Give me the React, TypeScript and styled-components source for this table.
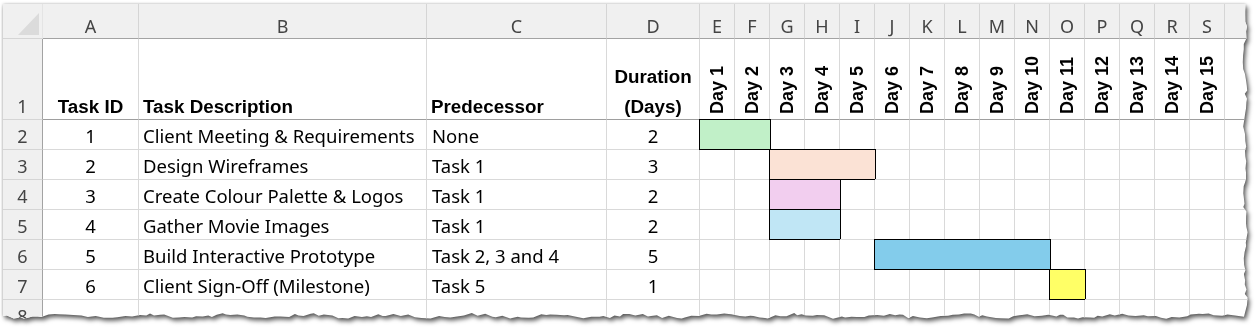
import React from 'react';
import styled, { createGlobalStyle } from 'styled-components';

const COLUMN_LETTERS = 'ABCDEFGHIJKLMNOPQRST'.split('');
const DAY_COUNT = 15;
const GANTT_COLS = DAY_COUNT + 1;

const tasks = [
  { id: 1, desc: 'Client Meeting & Requirements', pred: 'None', dur: 2, start: 1, color: '#c1f0c8' },
  { id: 2, desc: 'Design Wireframes', pred: 'Task 1', dur: 3, start: 3, color: '#fbe2d5' },
  { id: 3, desc: 'Create Colour Palette & Logos', pred: 'Task 1', dur: 2, start: 3, color: '#f2ceef' },
  { id: 4, desc: 'Gather Movie Images', pred: 'Task 1', dur: 2, start: 3, color: '#c0e6f5' },
  { id: 5, desc: 'Build Interactive Prototype', pred: 'Task 2, 3 and 4', dur: 5, start: 6, color: '#83cceb' },
  { id: 6, desc: 'Client Sign-Off (Milestone)', pred: 'Task 5', dur: 1, start: 11, color: '#ffff66' },
];

// jagged right and bottom edge, like a torn-off screenshot
const makeTear = (w: number, h: number) => {
  let seed = 11;
  const rnd = () => {
    seed = (seed * 9301 + 49297) % 233280;
    return seed / 233280;
  };
  const pts: string[] = ['0px 0px'];
  const rx = w - 5;
  for (let y = 0; y < h - 6; y += 3 + rnd() * 5) {
    const x = rx + Math.sin(y / 11) * 1.2 + (rnd() - 0.5) * 3;
    pts.push(`${x.toFixed(1)}px ${y.toFixed(1)}px`);
  }
  const by = h - 5;
  for (let x = w - 6; x > 0; x -= 3 + rnd() * 6) {
    const y = by + Math.sin(x / 13) * 1.5 + (rnd() - 0.5) * 3;
    pts.push(`${x.toFixed(1)}px ${y.toFixed(1)}px`);
  }
  pts.push(`0px ${by}px`);
  return `polygon(${pts.join(', ')})`;
};

const SHEET_W = 1247;
const SHEET_H = 317;
const tear = makeTear(SHEET_W, SHEET_H);

const blanks = (n: number, prefix: string) =>
  Array.from({ length: Math.max(n, 0) }, (_, c) => <Cell key={`${prefix}${c}`} />);

const App: React.FC = () => {
  const days = Array.from({ length: DAY_COUNT }, (_, i) => i + 1);

  return (
    <Page>
      <GlobalStyle />
      <Shadow>
        <Sheet $clip={tear}>
          <Grid>
            <Corner>
              <Triangle />
            </Corner>
            {COLUMN_LETTERS.map((l) => (
              <ColHead key={l}>{l}</ColHead>
            ))}

            <RowHead>1</RowHead>
            <HeadCell $center>Task ID</HeadCell>
            <HeadCell>Task Description</HeadCell>
            <HeadCell>Predecessor</HeadCell>
            <HeadCell $center>
              <span>Duration</span>
              <span>(Days)</span>
            </HeadCell>
            {days.map((d) => (
              <DayHead key={d}>
                <DayLabel>Day {d}</DayLabel>
              </DayHead>
            ))}
            <HeadCell />

            {tasks.map((t, i) => (
              <React.Fragment key={t.id}>
                <RowHead>{i + 2}</RowHead>
                <Cell $center>{t.id}</Cell>
                <Cell>{t.desc}</Cell>
                <Cell $pad={5}>{t.pred}</Cell>
                <Cell $center>{t.dur}</Cell>
                {blanks(t.start - 1, 'a')}
                <Bar $span={t.dur} $color={t.color} />
                {blanks(GANTT_COLS - (t.start - 1) - t.dur, 'b')}
              </React.Fragment>
            ))}

            <RowHead>8</RowHead>
            {blanks(4 + GANTT_COLS, 'r')}
          </Grid>
        </Sheet>
      </Shadow>
    </Page>
  );
};

const GlobalStyle = createGlobalStyle`
  body {
    margin: 0;
    background: #ffffff;
  }
  * {
    box-sizing: border-box;
  }
`;

const Page = styled.div`
  width: 1255px;
  height: 330px;
  padding: 4px 0 0 3px;
  overflow: hidden;
`;

const Shadow = styled.div`
  width: ${SHEET_W}px;
  filter: drop-shadow(0 0 1.5px rgba(0, 0, 0, 0.25)) drop-shadow(2px 3px 2px rgba(0, 0, 0, 0.6));
`;

const Sheet = styled.div<{ $clip: string }>`
  width: ${SHEET_W}px;
  height: ${SHEET_H}px;
  overflow: hidden;
  background: #ffffff;
  clip-path: ${(p) => p.$clip};
`;

const Grid = styled.div`
  display: grid;
  grid-template-columns: 40px 96px 288px 180px 93px repeat(15, 35px) 64px;
  grid-template-rows: 35px 81px repeat(7, 30px);
  font-family: 'Noto Sans', sans-serif;
  font-size: 18.5px;
  color: #000000;
`;

const Corner = styled.div`
  display: flex;
  align-items: flex-end;
  justify-content: flex-end;
  padding: 0 3px 3px 0;
  background: #f0f0f0;
  border-right: 1px solid #e4e4e4;
  border-bottom: 1px solid #d5d5d5;
`;

const Triangle = styled.div`
  width: 21px;
  height: 22px;
  background: #dbdbdb;
  clip-path: polygon(100% 0, 100% 100%, 0 100%);
`;

const ColHead = styled.div`
  display: flex;
  align-items: flex-end;
  justify-content: center;
  padding-bottom: 2px;
  line-height: 20px;
  font-size: 18px;
  color: #444444;
  background: #f0f0f0;
  border-right: 1px solid #d5d5d5;
  border-bottom: 1px solid #a3a3a3;
`;

const RowHead = styled.div`
  display: flex;
  align-items: flex-end;
  justify-content: center;
  padding-bottom: 3px;
  line-height: 20px;
  font-size: 18px;
  color: #444444;
  background: #f0f0f0;
  border-right: 1px solid #a3a3a3;
  border-bottom: 1px solid #d5d5d5;
  overflow: hidden;
`;

const Cell = styled.div<{ $center?: boolean; $pad?: number }>`
  display: flex;
  align-items: flex-end;
  justify-content: ${(p) => (p.$center ? 'center' : 'flex-start')};
  padding: 0 ${(p) => p.$pad ?? 4}px 3px;
  line-height: 20px;
  white-space: nowrap;
  overflow: hidden;
  border-right: 1px solid #d9d9d9;
  border-bottom: 1px solid #d9d9d9;
`;

const HeadCell = styled.div<{ $center?: boolean }>`
  display: flex;
  flex-direction: column;
  justify-content: flex-end;
  align-items: ${(p) => (p.$center ? 'center' : 'flex-start')};
  gap: 6px;
  padding: 0 4px;
  font-family: 'Liberation Sans', Arial, sans-serif;
  font-weight: bold;
  font-size: 18.8px;
  line-height: 24px;
  white-space: nowrap;
  border-right: 1px solid #d9d9d9;
  border-bottom: 1px solid #9e9e9e;
`;

const DayHead = styled.div`
  display: flex;
  flex-direction: column;
  justify-content: flex-end;
  align-items: center;
  padding-bottom: 5px;
  border-right: 1px solid #d9d9d9;
  border-bottom: 1px solid #9e9e9e;
`;

const DayLabel = styled.span`
  writing-mode: vertical-rl;
  transform: rotate(180deg);
  font-family: 'Liberation Sans', Arial, sans-serif;
  font-weight: bold;
  font-size: 18px;
  line-height: 1;
  white-space: nowrap;
`;

const Bar = styled.div<{ $span: number; $color: string }>`
  grid-column: span ${(p) => p.$span};
  margin: -1px -1px 0 -1px;
  background: ${(p) => p.$color};
  border: 1px solid #000000;
`;

export default App;
